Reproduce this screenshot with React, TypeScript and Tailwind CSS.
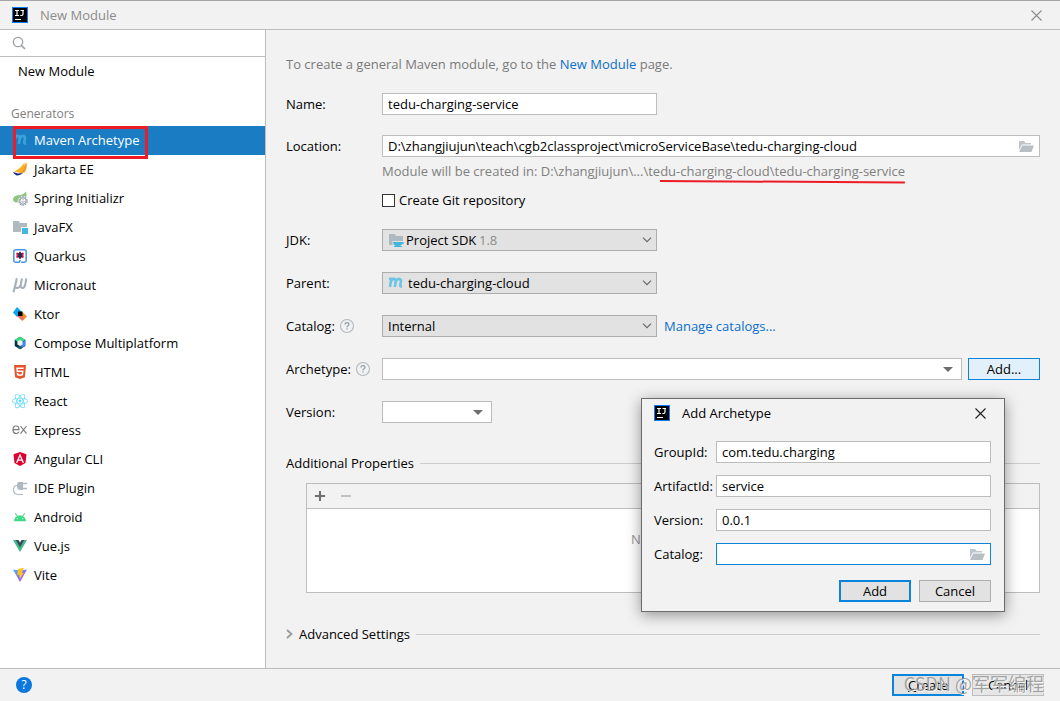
import React from "react";
import type { ReactNode } from "react";
import { FaAngular, FaHtml5 } from "react-icons/fa";
import { SiReact } from "react-icons/si";

const svgProps = { width: 16, height: 16, viewBox: "0 0 16 16", "aria-hidden": true, className: "shrink-0" } as const;

function IdeaLogo() {
  return (
    <svg {...svgProps}>
      <rect width="16" height="16" fill="#087cfa" />
      <rect x="1" y="1" width="14" height="14" fill="#000" />
      <path d="M3 3.500h4M5 3.500v5M3 8.500h4M8.500 3.500h3.500M11 3.500v3.600q0 1.400-1.300 1.400h-1.400" stroke="#fff" strokeWidth="1.200" fill="none" />
      <path d="M3 12.500h6" stroke="#fff" strokeWidth="1" />
    </svg>
  );
}

function MavenIcon({ color }: { color: string }) {
  return (
    <svg {...svgProps}>
      <path
        d="M1 3.800h2.300L2 12M3.200 6Q4.800 3.500 6.500 4Q8.100 4.500 7.700 6.800L6.800 12M7.700 6.500Q9.600 3.500 11.500 4Q13.300 4.500 12.900 6.600L12.200 10.300Q12.200 11.700 14 11.300"
        stroke={color}
        strokeWidth="2.600"
        fill="none"
      />
    </svg>
  );
}

function JakartaIcon() {
  return (
    <svg {...svgProps}>
      <path d="M14.300 1q1.500 6-2 10.800l-5.300.4Q12 7 14.300 1z" fill="#f7981d" />
      <path d="M12.500 1.500Q13.500 7 9 11.800L2 10.800Q9 7 12.500 1.500z" fill="#fdb126" />
      <path d="M1 11l5 1.500 5-.4Q8 14.900 4.800 14.500 2 13.500 1 11z" fill="#1b2a87" />
    </svg>
  );
}

function SpringIcon() {
  return (
    <svg {...svgProps}>
      <path d="M14 1.500Q15 5 14.300 7Q9 4 6 9.500L5.600 12.500Q1.500 13 1 9.500Q1 6 6 5.300Q11.500 5 14 1.500z" fill="#8dc67e" />
      <circle cx="11" cy="11" r="4" stroke="#9aa7b0" strokeWidth="1.600" strokeDasharray="1.800 .7" fill="#fff" />
      <circle cx="11" cy="11" r="3.100" stroke="#9aa7b0" fill="#fff" />
      <path d="M9.500 11.200a1.600 1.600 0 0 0 3 0M11 9v1.500" stroke="#9aa7b0" fill="none" />
    </svg>
  );
}

function JavaFxIcon() {
  return (
    <svg {...svgProps}>
      <path d="M1 2h5.500L8 4h7v4H9v5H1z" fill="#aeb9c0" />
      <rect x="10" y="9" width="6" height="6" fill="#40b6e0" />
    </svg>
  );
}

function QuarkusIcon() {
  return (
    <svg {...svgProps}>
      <path d="M9 14.200H12.500a1.700 1.700 0 0 0 1.700-1.700V3.500a1.700 1.700 0 0 0-1.700-1.700H3.500a1.700 1.700 0 0 0-1.700 1.700v9a1.700 1.700 0 0 0 1.700 1.700H7L8.500 12" fill="none" stroke="#4695eb" strokeWidth="1.500" />
      <path d="M4.500 5L11.500 9.500M11.500 5L4.500 9.500M8 3.700v7" stroke="#e5184f" strokeWidth="1.700" />
      <path d="M8 4l2 1.500 1 1.800-1 1.700-2 1.700-2-1.700-1-1.700 1-1.800z" fill="#1f2f4d" />
      <path d="M4.500 5.500L7 7.200 4.500 9zM11.500 5.500L9.500 7.200l2 1.800z" fill="#f0144e" />
    </svg>
  );
}

function MicronautIcon() {
  return (
    <svg {...svgProps}>
      <path d="M4.800 1.500L1.500 15.200M4.800 1.500L3.300 8.500Q2.900 11 5 11Q7.500 11 8.600 8L10 1.500M8.800 7.500Q8.200 11 10.300 11Q12.800 11 13.600 6L14.300 1.500" fill="none" stroke="#a3afb8" strokeWidth="2" />
    </svg>
  );
}

function KtorIcon() {
  return (
    <svg {...svgProps}>
      <path d="M5 1l5 5-5 5-4-4.500z" fill="#0aa5f5" />
      <path d="M10.500 6l4.500 4.500-4.500 4.500-5-4.500z" fill="#f98b28" />
      <path d="M5.500 10.500L8 8l4 4-2 2.500z" fill="#e0569b" opacity=".55" />
      <path d="M6 5.500h4.500V10H6z" fill="#000" />
    </svg>
  );
}

function ComposeIcon() {
  return (
    <svg {...svgProps}>
      <path d="M8 1.800l5.300 3.100v6.200L8 14.200l-5.300-3.100V4.900z" fill="#083042" />
      <path d="M8 1.800l5.300 3.100L8 8 2.700 5z" fill="#3ddc84" />
      <path d="M13.300 5v6.100L8 14.200V9z" fill="#4285f4" />
      <path d="M8 14.200l-3-1.700 3-2 3 2z" fill="#1f5f6b" />
      <path d="M8 5l2.600 1.600v2.900L8 11 5.400 9.500V6.600z" fill="#e8f4fa" />
    </svg>
  );
}

function ExpressIcon() {
  return (
    <svg {...svgProps}>
      <path d="M1 7.700h6Q7 4 4 4T1 7.900Q1.200 11.500 4.200 11.500Q6.200 11.500 6.900 9.800M8.500 4L14.500 11.600M14.500 4L8.500 11.600" fill="none" stroke="#7d7d7d" strokeWidth="1.200" />
    </svg>
  );
}

function PluginIcon() {
  return (
    <svg {...svgProps}>
      <path d="M6 2h5v8H8Q5 10 5 6Q5 3 6 2z" fill="#aeb9c0" />
      <path d="M11 3.500h4M11 8.500h4" stroke="#aeb9c0" strokeWidth="1.300" />
      <path d="M5.500 5.500H4Q1.500 6 1.500 9.500Q1.500 14 6 14.500H11" fill="none" stroke="#aeb9c0" strokeWidth="1.100" />
    </svg>
  );
}

function AndroidIcon() {
  return (
    <svg {...svgProps}>
      <path d="M5 7L3.300 4M11 7l1.700-3" fill="none" stroke="#3ddc84" strokeWidth="1" />
      <path d="M2 12.200a6 6 0 0 1 12 0z" fill="#3ddc84" />
      <circle cx="5.300" cy="9.600" r=".7" fill="#fff" />
      <circle cx="10.700" cy="9.600" r=".7" fill="#fff" />
    </svg>
  );
}

function VueIcon() {
  return (
    <svg {...svgProps}>
      <path d="M1 2h14L8 14z" fill="#41b883" />
      <path d="M3.800 2h8.400L8 9.300z" fill="#35495e" />
      <path d="M6.500 2h3L8 4.500z" fill="#fff" />
    </svg>
  );
}

function ViteIcon() {
  return (
    <svg {...svgProps}>
      <defs>
        <linearGradient id="vite-body" x1="0" y1="0" x2="1" y2="1">
          <stop offset="0" stopColor="#41b7ff" />
          <stop offset="1" stopColor="#bd34fe" />
        </linearGradient>
      </defs>
      <path d="M1 2.500L8 3.600l7-1.100L8 15z" fill="url(#vite-body)" />
      <path d="M12 .8L6 1.900l-.7 6.100 2.200-.3-.5 2.600 1.200-.3-.6 2.800 4.200-7-2 .2z" fill="#ffc21a" />
    </svg>
  );
}

function OpenFolderIcon() {
  return (
    <svg {...svgProps}>
      <path d="M1 3h5l1.500 2H13v1.500H4L1 12z" fill="#c0c5c9" />
      <path d="M4.300 7.500H16L13.500 14H1z" fill="#b7bec4" />
    </svg>
  );
}

function SdkIcon() {
  return (
    <svg {...svgProps}>
      <path d="M1 2h5.500L8 4h7v5H4.500v4H1z" fill="#aeb9c0" />
      <path d="M5 10h9.500q1.500 0 1.500 1t-2 1.300Q13 14 11 14H8Q5.500 13.500 5 10z" fill="#40b6e0" />
      <path d="M6 14.500h8" stroke="#40b6e0" />
    </svg>
  );
}

function HelpMark() {
  return (
    <button type="button" aria-label="Help" className="shrink-0">
      <svg {...svgProps}>
        <circle cx="8" cy="8" r="6.500" fill="none" stroke="#b0b9c0" strokeWidth="1.100" />
        <path d="M6 6.500Q6 4.600 8 4.600t2 1.700Q10 7.200 9 7.700T8 9.300M8 10.300v1.300" fill="none" stroke="#8e9aa3" strokeWidth="1.200" />
      </svg>
    </button>
  );
}

function CloseIcon() {
  return (
    <svg width="11" height="11" viewBox="0 0 11 11" aria-hidden>
      <path d="M.5.500l10 10M10.500.500l-10 10" stroke="currentColor" strokeWidth="1.100" />
    </svg>
  );
}

const generators: { name: string; icon: ReactNode }[] = [
  { name: "Maven Archetype", icon: <MavenIcon color="#3ba3dc" /> },
  { name: "Jakarta EE", icon: <JakartaIcon /> },
  { name: "Spring Initializr", icon: <SpringIcon /> },
  { name: "JavaFX", icon: <JavaFxIcon /> },
  { name: "Quarkus", icon: <QuarkusIcon /> },
  { name: "Micronaut", icon: <MicronautIcon /> },
  { name: "Ktor", icon: <KtorIcon /> },
  { name: "Compose Multiplatform", icon: <ComposeIcon /> },
  { name: "HTML", icon: <FaHtml5 size={16} color="#e5532d" className="shrink-0" /> },
  { name: "React", icon: <SiReact size={16} color="#61dafb" className="shrink-0" /> },
  { name: "Express", icon: <ExpressIcon /> },
  { name: "Angular CLI", icon: <FaAngular size={16} color="#dd0031" className="shrink-0" /> },
  { name: "IDE Plugin", icon: <PluginIcon /> },
  { name: "Android", icon: <AndroidIcon /> },
  { name: "Vue.js", icon: <VueIcon /> },
  { name: "Vite", icon: <ViteIcon /> },
];

const fieldClass = "h-[22px] w-full border border-[#bdbdbd] bg-white px-[5px] text-black outline-none";
const selectClass = "h-[22px] w-full appearance-none border border-[#adadad] bg-[#e2e2e2] text-black outline-none";

function Row({ label, id, help, children }: { label: string; id: string; help?: boolean; children: ReactNode }) {
  return (
    <div className="flex h-[22px] items-center">
      <div className="flex w-24 shrink-0 items-center gap-1">
        <label htmlFor={id}>{label}</label>
        {help && <HelpMark />}
      </div>
      {children}
    </div>
  );
}

function Chevron() {
  return (
    <svg width="10" height="6" viewBox="0 0 10 6" aria-hidden className="pointer-events-none absolute top-2 right-[5px]">
      <path d="M1 .7l4 4 4-4" fill="none" stroke="#666" strokeWidth="1.100" />
    </svg>
  );
}

function Triangle() {
  return (
    <svg width="10" height="5" viewBox="0 0 10 5" aria-hidden className="pointer-events-none absolute top-[9px] right-[9px]">
      <path d="M0 0h10L5 5z" fill="#6e6e6e" />
    </svg>
  );
}

function DialogRow({ label, id, children }: { label: string; id: string; children: ReactNode }) {
  return (
    <div className="flex h-[22px] items-center">
      <label htmlFor={id} className="w-[62px] shrink-0">
        {label}
      </label>
      {children}
    </div>
  );
}

function AddArchetypeDialog() {
  return (
    <section
      role="dialog"
      aria-label="Add Archetype"
      className="absolute top-[398px] left-[641px] w-[364px] border border-[#6b6b6b] bg-[#f2f2f2] pr-[13px] pb-[9px] pl-3 shadow-[0_3px_14px_rgba(0,0,0,0.4)]"
    >
      <header className="flex h-7 items-center">
        <IdeaLogo />
        <h2 className="ml-3 flex-1">Add Archetype</h2>
        <button type="button" aria-label="Close dialog" className="mr-[5px] text-[#222]">
          <CloseIcon />
        </button>
      </header>
      <form className="mt-[14px] flex flex-col gap-3">
        <DialogRow label="GroupId:" id="group-id">
          <input id="group-id" defaultValue="com.tedu.charging" className={fieldClass} />
        </DialogRow>
        <DialogRow label="ArtifactId:" id="artifact-id">
          <input id="artifact-id" defaultValue="service" className={fieldClass} />
        </DialogRow>
        <DialogRow label="Version:" id="archetype-version">
          <input id="archetype-version" defaultValue="0.0.1" className={fieldClass} />
        </DialogRow>
        <DialogRow label="Catalog:" id="archetype-catalog">
          <div className="flex h-[22px] flex-1 items-center border border-[#0a84dc] bg-white pr-[5px]">
            <input id="archetype-catalog" className="min-w-0 flex-1 px-[5px] outline-none" />
            <button type="button" aria-label="Browse catalog">
              <OpenFolderIcon />
            </button>
          </div>
        </DialogRow>
      </form>
      <div className="mt-[15px] flex justify-end gap-2">
        <button type="button" className="h-[22px] w-[72px] border-2 border-[#0a84dc] bg-[#e2e2e2] leading-[18px]">
          Add
        </button>
        <button type="button" className="h-[22px] w-[72px] border border-[#adadad] bg-[#e2e2e2] leading-5">
          Cancel
        </button>
      </div>
    </section>
  );
}

export default function App() {
  return (
    <div className="relative flex min-h-screen flex-col bg-[#f2f2f2] font-['Open_Sans','Noto_Sans_CJK_SC',sans-serif] text-[13px] leading-5 text-black">
      <header className="flex h-[30px] items-center border-t border-b border-t-[#a5a5a5] border-b-[#bdbdbd] pr-[18px] pl-3 text-[#8c8c8c]">
        <IdeaLogo />
        <h1 className="ml-3 flex-1">New Module</h1>
        <button type="button" aria-label="Close">
          <CloseIcon />
        </button>
      </header>

      <div className="flex flex-1">
        <aside className="flex w-[266px] shrink-0 flex-col border-r border-[#bdbdbd] bg-white">
          <div className="flex h-[27px] items-center border-b border-[#bdbdbd] pl-3">
            <svg width="14" height="14" viewBox="0 0 14 14" aria-hidden className="shrink-0">
              <circle cx="6" cy="6" r="4.700" fill="none" stroke="#9a9fa3" strokeWidth="1.200" />
              <path d="M9.500 9.500l3.500 3.500" stroke="#9a9fa3" strokeWidth="1.600" />
            </svg>
            <input aria-label="Search" className="min-w-0 flex-1 px-1 outline-none" />
          </div>
          <button type="button" className="h-7 pl-[18px] text-left">
            New Module
          </button>
          <h2 className="mt-[18px] h-[23px] pl-[11px] text-xs leading-[22px] text-[#808080]">Generators</h2>
          <ul>
            {generators.map(({ name, icon }, i) => (
              <li key={name} className="relative">
                <button
                  type="button"
                  className={
                    i === 0
                      ? "flex h-[29px] w-full items-center gap-[6px] bg-[#1a7dc4] pb-px pl-3 text-white"
                      : "flex h-[29px] w-full items-center gap-[6px] pb-px pl-3"
                  }
                >
                  {icon}
                  {name}
                </button>
                {i === 0 && (
                  <span className="pointer-events-none absolute top-0 left-[13px] z-10 h-[33px] w-[135px] border-[3px] border-[#ed1c24]" />
                )}
              </li>
            ))}
          </ul>
        </aside>

        <main className="min-w-0 flex-1 px-5 pt-6">
          <p className="text-[#7a7a7a]">
            To create a general Maven module, go to the{" "}
            <a href="#new-module" className="text-[#0b6fcb]">
              New Module
            </a>{" "}
            page.
          </p>

          <div className="mt-[19px]">
            <Row label="Name:" id="name">
              <div className="w-[275px]">
                <input id="name" defaultValue="tedu-charging-service" className={fieldClass} />
              </div>
            </Row>
          </div>

          <div className="mt-5">
            <Row label="Location:" id="location">
              <div className="flex h-[22px] flex-1 items-center border border-[#bdbdbd] bg-white pr-[5px]">
                <input
                  id="location"
                  defaultValue="D:\zhangjiujun\teach\cgb2classproject\microServiceBase\tedu-charging-cloud"
                  className="min-w-0 flex-1 px-[5px] outline-none"
                />
                <button type="button" aria-label="Browse location">
                  <OpenFolderIcon />
                </button>
              </div>
            </Row>
          </div>
          <p className="mt-1 pl-24 text-[#808080]">
            Module will be created in: D:\zhangjiujun\...\te
            <span className="relative">
              du-charging-cloud\tedu-charging-service
              <svg
                viewBox="0 0 242 4"
                preserveAspectRatio="none"
                aria-hidden
                className="absolute top-full left-0 h-1 w-full"
              >
                <path d="M0 1l242 1.500" stroke="#ed1c24" strokeWidth="2" />
              </svg>
            </span>
          </p>
          <label className="mt-[9px] ml-24 flex items-center gap-1">
            <input type="checkbox" className="m-0 size-[13px] appearance-none border border-[#333] bg-white" />
            Create Git repository
          </label>

          <div className="mt-[19px] flex flex-col gap-[21px]">
            <Row label="JDK:" id="jdk">
              <div className="relative w-[275px]">
                <select id="jdk" className={`${selectClass} pl-[23px]`}>
                  <option>Project SDK</option>
                </select>
                <div className="pointer-events-none absolute top-[3px] left-[6px]">
                  <SdkIcon />
                </div>
                <span className="pointer-events-none absolute top-px left-[97px] text-[#8c8c8c]">1.8</span>
                <Chevron />
              </div>
            </Row>
            <Row label="Parent:" id="parent">
              <div className="relative w-[275px]">
                <select id="parent" className={`${selectClass} pl-[25px]`}>
                  <option>tedu-charging-cloud</option>
                </select>
                <div className="pointer-events-none absolute top-[3px] left-[6px]">
                  <MavenIcon color="#6cc4e6" />
                </div>
                <Chevron />
              </div>
            </Row>
            <Row label="Catalog:" id="catalog" help>
              <div className="relative w-[275px]">
                <select id="catalog" className={`${selectClass} pl-[5px]`}>
                  <option>Internal</option>
                </select>
                <Chevron />
              </div>
              <a href="#catalogs" className="ml-[7px] text-[#0b6fcb]">
                Manage catalogs...
              </a>
            </Row>
            <Row label="Archetype:" id="archetype" help>
              <div className="relative flex-1">
                <select id="archetype" className={`${fieldClass} appearance-none`}>
                  <option></option>
                </select>
                <Triangle />
              </div>
              <button type="button" className="ml-[6px] h-[22px] w-[72px] border border-[#0a84dc] bg-[#e1f0fa] leading-5">
                Add...
              </button>
            </Row>
            <Row label="Version:" id="version">
              <div className="relative w-[110px]">
                <select id="version" className={`${fieldClass} appearance-none`}>
                  <option></option>
                </select>
                <Triangle />
              </div>
            </Row>
          </div>

          <div className="mt-[30px] flex items-center gap-[6px]">
            <h2>Additional Properties</h2>
            <div className="h-px flex-1 bg-[#cdcdcd]" />
          </div>
          <div className="mt-[10px] ml-5 border border-[#bdbdbd]">
            <div className="flex h-[25px] items-center gap-4 border-b border-[#bdbdbd] pl-2">
              <button type="button" aria-label="Add property">
                <svg width="10" height="10" viewBox="0 0 10 10" aria-hidden>
                  <path d="M0 5h10M5 0v10" stroke="#6e6e6e" strokeWidth="2" />
                </svg>
              </button>
              <button type="button" aria-label="Remove property" disabled>
                <svg width="10" height="10" viewBox="0 0 10 10" aria-hidden>
                  <path d="M0 5h10" stroke="#c0c0c0" strokeWidth="2" />
                </svg>
              </button>
            </div>
            <div className="flex h-[83px] justify-center bg-white pt-5 text-[#999]">No properties</div>
          </div>

          <button type="button" className="mt-[31px] flex w-full items-center text-left">
            <svg width="7" height="10" viewBox="0 0 7 10" aria-hidden className="mr-[6px]">
              <path d="M1 1l4.500 4L1 9" fill="none" stroke="#9a9a9a" strokeWidth="1.800" />
            </svg>
            Advanced Settings
            <span className="ml-[6px] h-px flex-1 bg-[#cdcdcd]" />
          </button>
        </main>
      </div>

      <footer className="flex h-[33px] items-center border-t border-[#bdbdbd] pr-4 pl-4">
        <button type="button" aria-label="Help" className="flex size-4 items-center justify-center rounded-full bg-[#0a78dc] text-xs text-white">
          ?
        </button>
        <div className="relative ml-auto flex gap-2">
          <button type="button" className="h-[22px] w-[72px] border-2 border-[#0a84dc] bg-[#e2e2e2] leading-[18px]">
            <u>C</u>reate
          </button>
          <button type="button" className="h-[22px] w-[72px] border border-[#bdbdbd] bg-[#e6e6e6] leading-5">
            Cancel
          </button>
          <span className="pointer-events-none absolute -top-[2px] right-0 font-['Noto_Sans_CJK_SC',sans-serif] text-[18px] leading-[22px] whitespace-nowrap text-[#8f8f8f]/80 [text-shadow:1px_1px_0_#f5f5f5]">
            CSDN @军军编程
          </span>
        </div>
      </footer>

      <AddArchetypeDialog />
    </div>
  );
}
